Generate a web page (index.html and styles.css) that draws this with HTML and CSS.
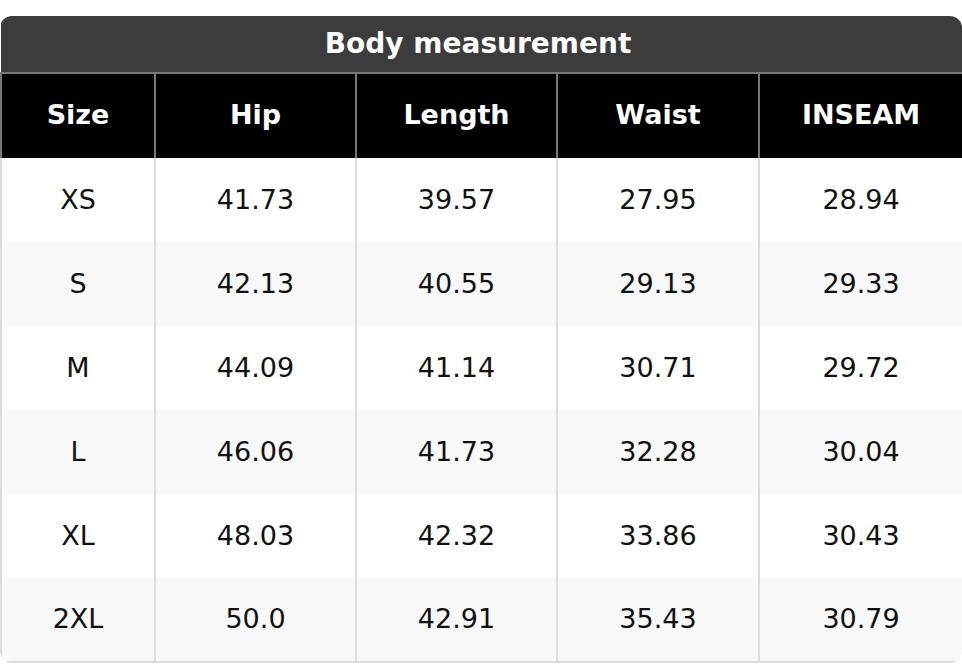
FILE: index.html
```html
<!DOCTYPE html>
<html lang="en">
<head>
<meta charset="utf-8">
<title>Body measurement</title>
<link rel="stylesheet" href="styles.css">
</head>
<body>
<div class="card">
  <table class="size-table">
    <colgroup>
      <col class="c-size">
      <col class="c-mid">
      <col class="c-mid">
      <col class="c-four">
      <col class="c-last">
    </colgroup>
    <thead>
      <tr class="title-row"><th colspan="5">Body measurement</th></tr>
      <tr class="head-row">
        <th>Size</th><th>Hip</th><th>Length</th><th>Waist</th><th>INSEAM</th>
      </tr>
    </thead>
    <tbody>
      <tr><td>XS</td><td>41.73</td><td>39.57</td><td>27.95</td><td>28.94</td></tr>
      <tr><td>S</td><td>42.13</td><td>40.55</td><td>29.13</td><td>29.33</td></tr>
      <tr><td>M</td><td>44.09</td><td>41.14</td><td>30.71</td><td>29.72</td></tr>
      <tr><td>L</td><td>46.06</td><td>41.73</td><td>32.28</td><td>30.04</td></tr>
      <tr><td>XL</td><td>48.03</td><td>42.32</td><td>33.86</td><td>30.43</td></tr>
      <tr><td>2XL</td><td>50.0</td><td>42.91</td><td>35.43</td><td>30.79</td></tr>
    </tbody>
  </table>
</div>
</body>
</html>
```

FILE: styles.css
```css
* { box-sizing: border-box; }

html, body {
  margin: 0;
  padding: 0;
  background: #ffffff;
}

body {
  padding-top: 16px;
  font-family: "DejaVu Sans", "Liberation Sans", sans-serif;
}

.card {
  width: 962px;
  border-radius: 12px;
  overflow: hidden;
}

.size-table {
  width: 962px;
  border-collapse: collapse;
  table-layout: fixed;
}

.c-size { width: 154px; }
.c-mid { width: 201px; }
.c-four { width: 202px; }
.c-last { width: 204px; }

.title-row th {
  height: 57px;
  padding: 0 8px 2px 0;
  background: #3c3c3c;
  color: #ffffff;
  font-size: 28px;
  font-weight: bold;
  text-align: center;
  border: none;
  border-bottom: 2px solid #777777;
}

.head-row th {
  height: 85px;
  padding: 0 0 3px 0;
  background: #000000;
  color: #ffffff;
  font-size: 27px;
  font-weight: bold;
  text-align: center;
  border: 2px solid #777777;
  border-bottom: none;
}

.size-table td {
  height: 84px;
  padding: 0 0 2px 0;
  color: #111111;
  font-size: 27px;
  text-align: center;
  border-left: 2px solid #dddddd;
  border-right: 2px solid #dddddd;
  background: #ffffff;
}

.size-table tbody tr:nth-child(even) td {
  background: #f8f8f8;
}

.size-table tbody tr:last-child td {
  border-bottom: 2px solid #dddddd;
}
```
